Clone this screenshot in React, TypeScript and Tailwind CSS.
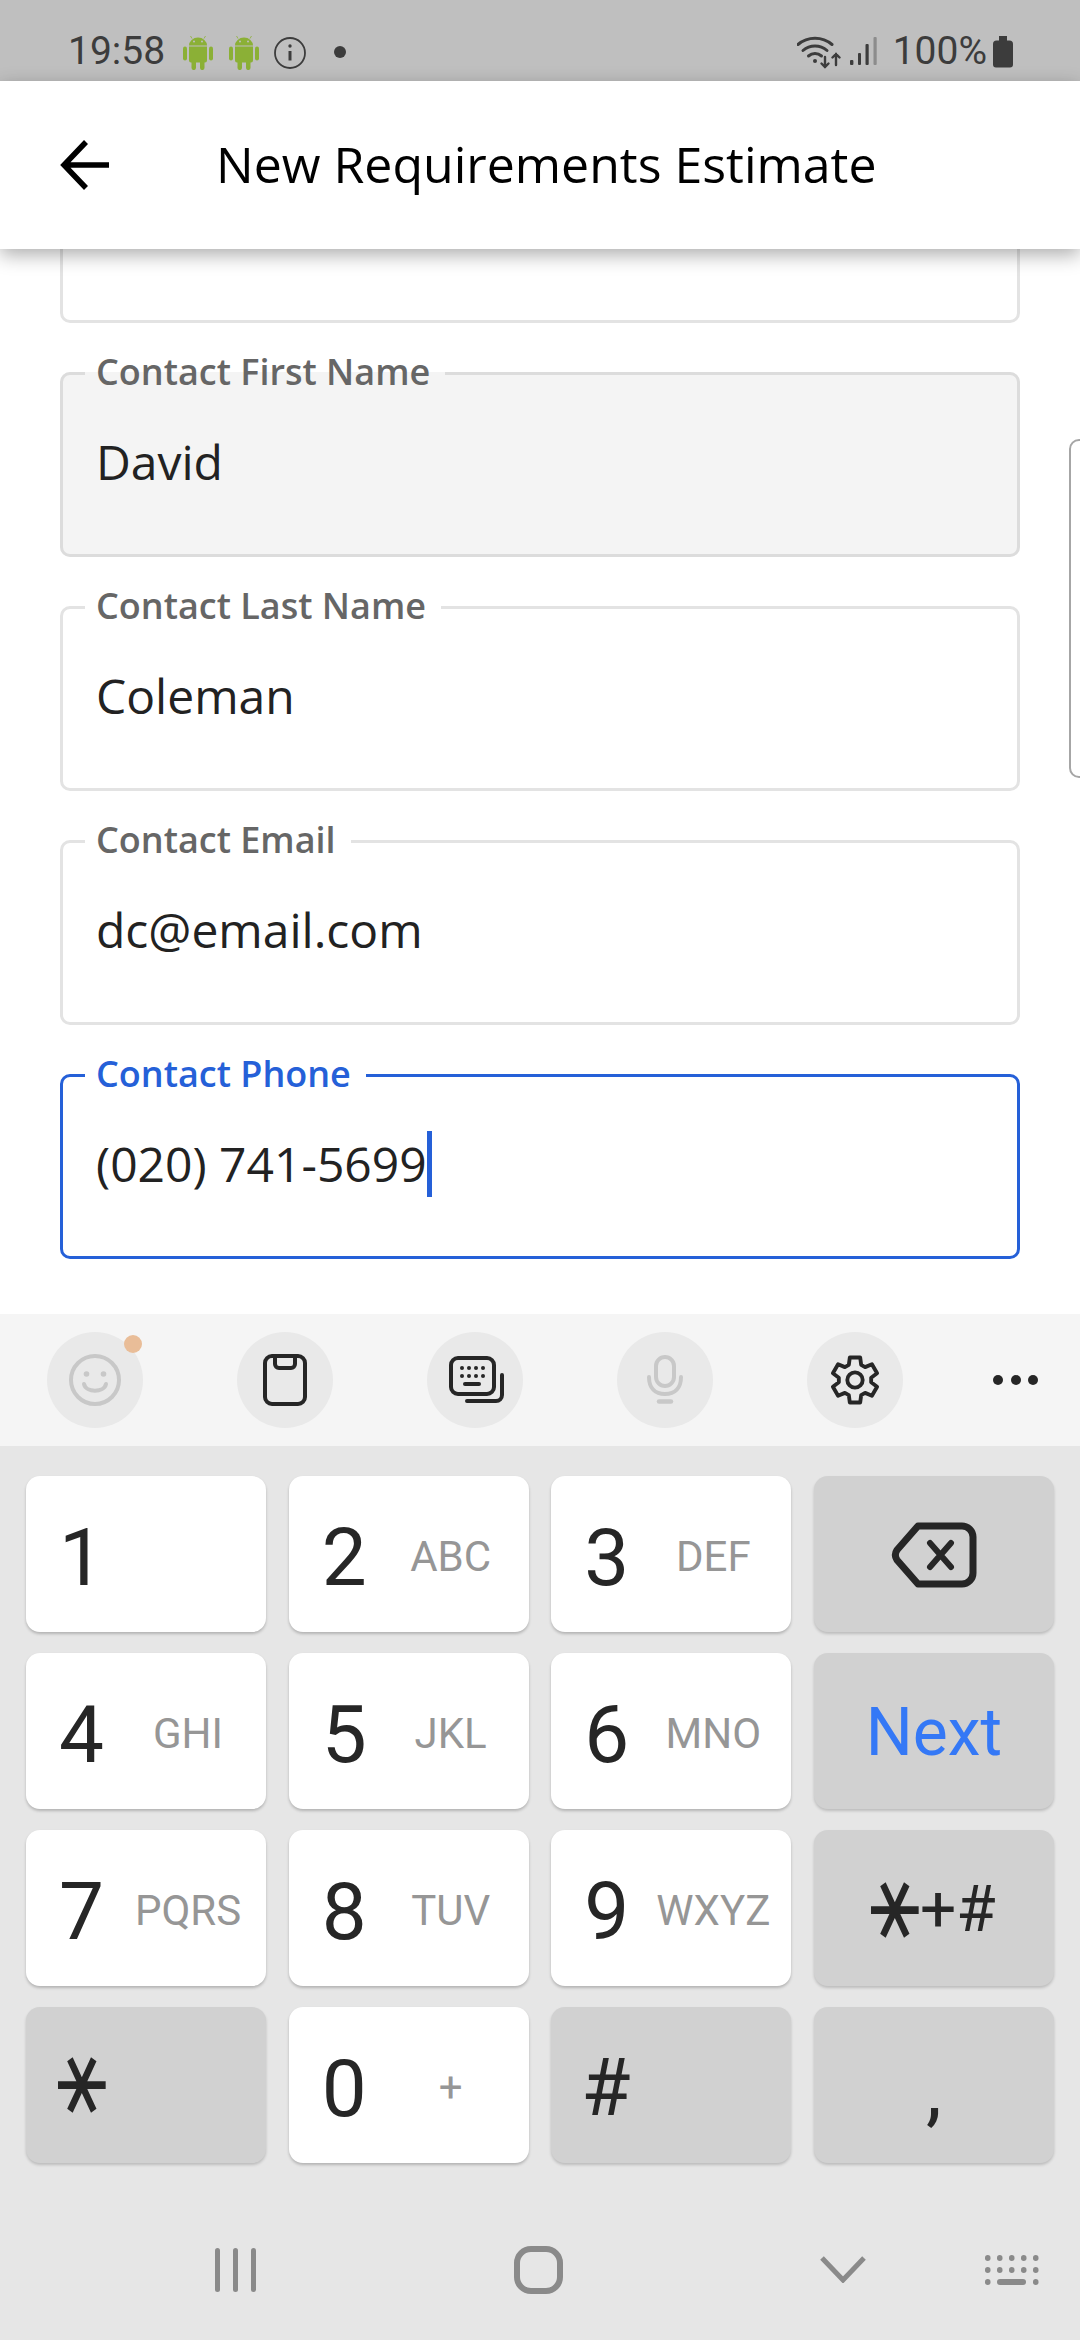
const gearPath = (() => {
  const pts: string[] = [];
  for (let i = 0; i < 6; i++) {
    const a = -90 + i * 60;
    const at = (deg: number, r: number) => {
      const t = ((a + deg) * Math.PI) / 180;
      return `${(26 + r * Math.cos(t)).toFixed(1)} ${(26 + r * Math.sin(t)).toFixed(1)}`;
    };
    pts.push(at(-22, 17), at(-13, 24), at(13, 24), at(22, 17));
  }
  return 'M' + pts.join('L') + 'Z';
})();

function Android() {
  return (
    <svg className="w-[30px] h-[34px]" viewBox="0 0 30 34" fill="#8bb036">
      <path d="M6 9.6a9 8 0 0 1 18 0z" />
      <path d="M9 2.5 7.5 0M21 2.5 22.5 0" stroke="#8bb036" strokeWidth="0.8" />
      <circle cx="11" cy="5.5" r="1" fill="#bfbfbf" />
      <circle cx="19" cy="5.5" r="1" fill="#bfbfbf" />
      <path d="M6 10.6h18v14a2 2 0 0 1-2 2h-.5v5.2a2.2 2.2 0 0 1-4.5 0v-5.2h-4v5.2a2.2 2.2 0 0 1-4.5 0v-5.2H8a2 2 0 0 1-2-2z" />
      <rect x="0" y="10.6" width="4" height="14" rx="2" />
      <rect x="26" y="10.6" width="4" height="14" rx="2" />
    </svg>
  );
}

function StatusBar() {
  return (
    <div className="h-[81px] shrink-0 bg-[#bfbfbf] flex items-start text-[#3c3c3c] font-['Roboto',sans-serif] text-[39px] leading-[44px]">
      <span className="ml-[68px] mt-[29px]">19:58</span>
      <div className="ml-[18px] mt-[36px] flex gap-[16px]">
        <Android />
        <Android />
      </div>
      <svg className="ml-[15px] mt-[36px] w-[32px] h-[34px]" viewBox="0 0 32 34" fill="none" stroke="#3c3c3c">
        <circle cx="16" cy="17" r="15" strokeWidth="1.8" />
        <circle cx="16" cy="10" r="1.7" fill="#3c3c3c" stroke="none" />
        <path d="M16 15v9.5" strokeWidth="3" />
      </svg>
      <div className="ml-[28px] mt-[46px] w-[12px] h-[12px] rounded-full bg-[#3c3c3c]"></div>
      <div className="flex-1"></div>
      <svg className="mt-[35px] w-[44px] h-[34px]" viewBox="0 0 44 34" fill="none" stroke="#3c3c3c" strokeLinecap="round">
        <path d="M1 9.5a26 26 0 0 1 34 0" strokeWidth="3" />
        <path d="M6 15.5a18 18 0 0 1 24 0" strokeWidth="3" />
        <path d="M11.5 21a10 10 0 0 1 13 0" strokeWidth="3" />
        <circle cx="18" cy="26" r="2" fill="#3c3c3c" stroke="none" />
        <path d="M28 22v10M24.5 28.5 28 32l3.5-3.5" strokeWidth="2.4" />
        <path d="M39 30V19M35.5 22.5 39 19l3.5 3.5" strokeWidth="2.4" />
      </svg>
      <svg className="ml-[9px] mt-[36px] w-[28px] h-[30px]" viewBox="0 0 28 30" fill="#3c3c3c">
        <rect x="0" y="24" width="3.4" height="5" rx="1" />
        <rect x="8" y="17" width="3" height="12" rx="1" />
        <rect x="15.5" y="8" width="3.2" height="21" rx="1" />
        <rect x="23.5" y="1" width="3.2" height="28" rx="1" fill="#8c8c8c" />
      </svg>
      <span className="ml-[15px] mt-[29px]">100%</span>
      <svg className="ml-[6px] mr-[67px] mt-[36px] w-[20px] h-[32px]" viewBox="0 0 20 32" fill="#3c3c3c">
        <path d="M6 0h8v4.5h2.5A3.500 3.500 0 0 1 20 8v20.500a3 3 0 0 1-3 3H3a3 3 0 0 1-3-3V8a3.500 3.500 0 0 1 3.500-3.500H6z" />
      </svg>
    </div>
  );
}

function AppBar() {
  return (
    <header className="relative z-10 h-[168px] shrink-0 bg-white flex items-center shadow-[0_6px_18px_rgba(0,0,0,0.32)]">
      <svg className="ml-[60px] w-[52px] h-[50px]" viewBox="0 0 52 50" fill="none" stroke="#000" strokeWidth="5.500">
        <path d="M49 25H5M26 2 4 25l22 23" />
      </svg>
      <h1 className="ml-[104px] pb-[2px] text-[50px] leading-[60px] font-medium text-black font-['Open_Sans',sans-serif]">
        New Requirements Estimate
      </h1>
    </header>
  );
}

function Field({ label, value, disabled, focused }: { label: string; value?: string; disabled?: boolean; focused?: boolean }) {
  return (
    <fieldset
      className={
        'h-[206px] shrink-0 border-[3px] rounded-[10px] ' +
        (focused ? 'border-[#2560d8] ' : disabled ? 'border-[#dcdcdc] bg-[#f4f4f4] ' : 'border-[#e3e3e3] ')
      }
    >
      <legend
        className={
          "ml-[22px] pl-[11px] pr-[15px] pb-[2px] text-[36px] leading-[42px] font-semibold font-['Open_Sans',sans-serif] " +
          (focused ? 'text-[#2560d8]' : 'text-[#666666]')
        }
      >
        {label}
      </legend>
      <div className="h-[134px] pl-[33px] flex items-center text-[48px] leading-[60px] text-[#222222] font-['Open_Sans',sans-serif]">
        <span>{value}</span>
        {focused && <span className="w-[5px] h-[66px] bg-[#2560d8]"></span>}
      </div>
    </fieldset>
  );
}

function Form() {
  return (
    <main className="relative flex-1 min-h-0 overflow-hidden bg-white px-[60px] pb-[55px] flex flex-col justify-end gap-[28px]">
      <Field label="" />
      <Field label="Contact First Name" value="David" disabled />
      <Field label="Contact Last Name" value="Coleman" />
      <Field label="Contact Email" value="dc@email.com" />
      <Field label="Contact Phone" value="(020) 741-5699" focused />
      <div className="absolute left-[1069px] top-[190px] w-[30px] h-[339px] border-2 border-[#a6a6a6] rounded-[10px]"></div>
    </main>
  );
}

function ToolCircle({ children, badge }: { children: React.ReactNode; badge?: boolean }) {
  return (
    <div className="relative w-[96px] h-[96px] rounded-full bg-[#e9e9e9] flex items-center justify-center">
      {children}
      {badge && <div className="absolute right-[1px] top-[3px] w-[18px] h-[18px] rounded-full bg-[#e9bd98]"></div>}
    </div>
  );
}

function Toolbar() {
  return (
    <div className="h-[132px] shrink-0 bg-[#f5f5f5] pl-[47px] flex items-center gap-[94px]">
      <ToolCircle badge>
        <svg className="w-[52px] h-[52px]" viewBox="0 0 52 52" fill="none" stroke="#c8c8c8" strokeWidth="4" strokeLinecap="round">
          <circle cx="26" cy="26" r="24" />
          <circle cx="17.500" cy="20" r="2.800" fill="#c8c8c8" stroke="none" />
          <circle cx="34.500" cy="20" r="2.800" fill="#c8c8c8" stroke="none" />
          <path d="M15 30c2 9 20 9 22 0" />
        </svg>
      </ToolCircle>
      <ToolCircle>
        <svg className="w-[44px] h-[52px]" viewBox="0 0 44 52" fill="none" stroke="#262626" strokeWidth="4">
          <rect x="2" y="2" width="40" height="48" rx="7" />
          <path d="M12 2v8a4 4 0 0 0 4 4h12a4 4 0 0 0 4-4V2" />
        </svg>
      </ToolCircle>
      <ToolCircle>
        <svg className="ml-[4px] w-[56px] h-[48px]" viewBox="0 0 56 48" fill="#262626" stroke="none">
          <rect x="2" y="2" width="43" height="36" rx="7" fill="none" stroke="#262626" strokeWidth="4" />
          <path d="M18 45h29a6 6 0 0 0 6-6V19" fill="none" stroke="#262626" strokeWidth="4" strokeLinecap="round" />
          <circle cx="13" cy="12" r="2" />
          <circle cx="20" cy="12" r="2" />
          <circle cx="27" cy="12" r="2" />
          <circle cx="34" cy="12" r="2" />
          <circle cx="13" cy="20" r="2" />
          <circle cx="20" cy="20" r="2" />
          <circle cx="27" cy="20" r="2" />
          <circle cx="34" cy="20" r="2" />
          <rect x="14" y="26" width="18" height="4" rx="2" />
        </svg>
      </ToolCircle>
      <ToolCircle>
        <svg className="w-[36px] h-[50px]" viewBox="0 0 36 50" fill="none" stroke="#c8c8c8" strokeWidth="4" strokeLinecap="round">
          <rect x="9" y="2" width="18" height="29" rx="9" />
          <path d="M2 22c0 11 6 17 16 17s16-6 16-17" />
          <path d="M12 46.500h12" strokeWidth="4.500" />
        </svg>
      </ToolCircle>
      <ToolCircle>
        <svg className="w-[50px] h-[52px]" viewBox="0 0 52 52" fill="none" stroke="#262626" strokeWidth="4" strokeLinejoin="round">
          <path d={gearPath} />
          <circle cx="26" cy="26" r="8" />
        </svg>
      </ToolCircle>
      <div className="-ml-[4px] flex gap-[7.500px]">
        <div className="w-[10px] h-[10px] rounded-full bg-[#262626]"></div>
        <div className="w-[10px] h-[10px] rounded-full bg-[#262626]"></div>
        <div className="w-[10px] h-[10px] rounded-full bg-[#262626]"></div>
      </div>
    </div>
  );
}

function DigitKey({ digit, letters }: { digit: string; letters?: string }) {
  return (
    <div className="h-[156px] rounded-[14px] bg-white shadow-[0_2px_3px_rgba(0,0,0,0.22)] grid grid-cols-[90px_144px] items-center font-['Roboto',sans-serif]">
      <span className="pl-[33px] pt-[7px] text-[80px] leading-[90px] text-[#262626]">{digit}</span>
      <span className="pt-[6px] text-center text-[42px] leading-[50px] text-[#969696]">{letters}</span>
    </div>
  );
}

function FnKey({ children }: { children: React.ReactNode }) {
  return (
    <div className="h-[156px] rounded-[14px] bg-[#d1d1d1] shadow-[0_2px_3px_rgba(0,0,0,0.18)] flex items-center text-[#262626] font-['Roboto',sans-serif]">
      {children}
    </div>
  );
}

function Star({ size }: { size: string }) {
  return <span className={"inline-block rotate-90 scale-x-[1.25] font-['DejaVu_Sans',sans-serif] " + size}>∗</span>;
}

function Keypad() {
  return (
    <div className="px-[26px] pt-[30px] grid grid-cols-4 gap-x-[22.670px] gap-y-[21px]">
      <DigitKey digit="1" />
      <DigitKey digit="2" letters="ABC" />
      <DigitKey digit="3" letters="DEF" />
      <FnKey>
        <svg className="mx-auto mt-[2px] w-[86px] h-[66px]" viewBox="0 0 86 66" fill="none" stroke="#262626" strokeWidth="7" strokeLinejoin="round" strokeLinecap="round">
          <path d="M27 4h44a11 11 0 0 1 11 11v36a11 11 0 0 1-11 11H27L6 38a9 9 0 0 1 0-10z" />
          <path d="M39 21l21 24M60 21 39 45" strokeWidth="6" />
        </svg>
      </FnKey>
      <DigitKey digit="4" letters="GHI" />
      <DigitKey digit="5" letters="JKL" />
      <DigitKey digit="6" letters="MNO" />
      <FnKey>
        <span className="mx-auto pt-[3px] text-[66px] leading-[70px] text-[#3478f6]">Next</span>
      </FnKey>
      <DigitKey digit="7" letters="PQRS" />
      <DigitKey digit="8" letters="TUV" />
      <DigitKey digit="9" letters="WXYZ" />
      <FnKey>
        <span className="mx-auto pt-[3px] pr-[7px] flex items-center text-[64px] leading-[70px]">
          <Star size="text-[76px] leading-[38px] -mr-[9px]" />
          <span>+#</span>
        </span>
      </FnKey>
      <FnKey>
        <span className="pl-[26px] pt-[20px] leading-[90px]">
          <Star size="text-[76px]" />
        </span>
      </FnKey>
      <DigitKey digit="0" letters="+" />
      <FnKey>
        <span className="pl-[30px] pt-[5px] text-[80px] leading-[90px]">#</span>
      </FnKey>
      <FnKey>
        <span className="mx-auto pt-[10px] text-[80px] leading-[90px]">,</span>
      </FnKey>
    </div>
  );
}

function NavBar() {
  return (
    <div className="flex-1 flex items-center mt-[36px] pl-[215px] text-[#8a8a8a]">
      <div className="flex gap-[13px]">
        <div className="w-[5px] h-[44px] rounded-full bg-[#8a8a8a]"></div>
        <div className="w-[5px] h-[44px] rounded-full bg-[#8a8a8a]"></div>
        <div className="w-[5px] h-[44px] rounded-full bg-[#8a8a8a]"></div>
      </div>
      <div className="ml-[258px] w-[49px] h-[48px] border-[6px] border-[#8a8a8a] rounded-[17px]"></div>
      <svg className="ml-[257px] w-[46px] h-[27px]" viewBox="0 0 46 27" fill="none" stroke="#8a8a8a" strokeWidth="5">
        <path d="M2 2l21 22L44 2" />
      </svg>
      <svg className="ml-[119px] w-[54px] h-[30px]" viewBox="0 0 54 30" fill="#8a8a8a">
        {[0, 12, 24, 36, 48].map((x) => (
          <rect key={x} x={x} y="0" width="5.500" height="6" rx="2.750" />
        ))}
        {[0, 12, 24, 36, 48].map((x) => (
          <rect key={x} x={x} y="12" width="5.500" height="6" rx="2.750" />
        ))}
        <rect x="0" y="24" width="5.500" height="6" rx="2.750" />
        <rect x="12" y="24" width="29" height="6" rx="3" />
        <rect x="48" y="24" width="5.500" height="6" rx="2.750" />
      </svg>
    </div>
  );
}

export default function App() {
  return (
    <div className="w-[1080px] h-[2340px] overflow-hidden flex flex-col bg-white">
      <StatusBar />
      <AppBar />
      <Form />
      <Toolbar />
      <div className="h-[894px] shrink-0 bg-[#e6e6e6] flex flex-col">
        <Keypad />
        <NavBar />
      </div>
    </div>
  );
}
